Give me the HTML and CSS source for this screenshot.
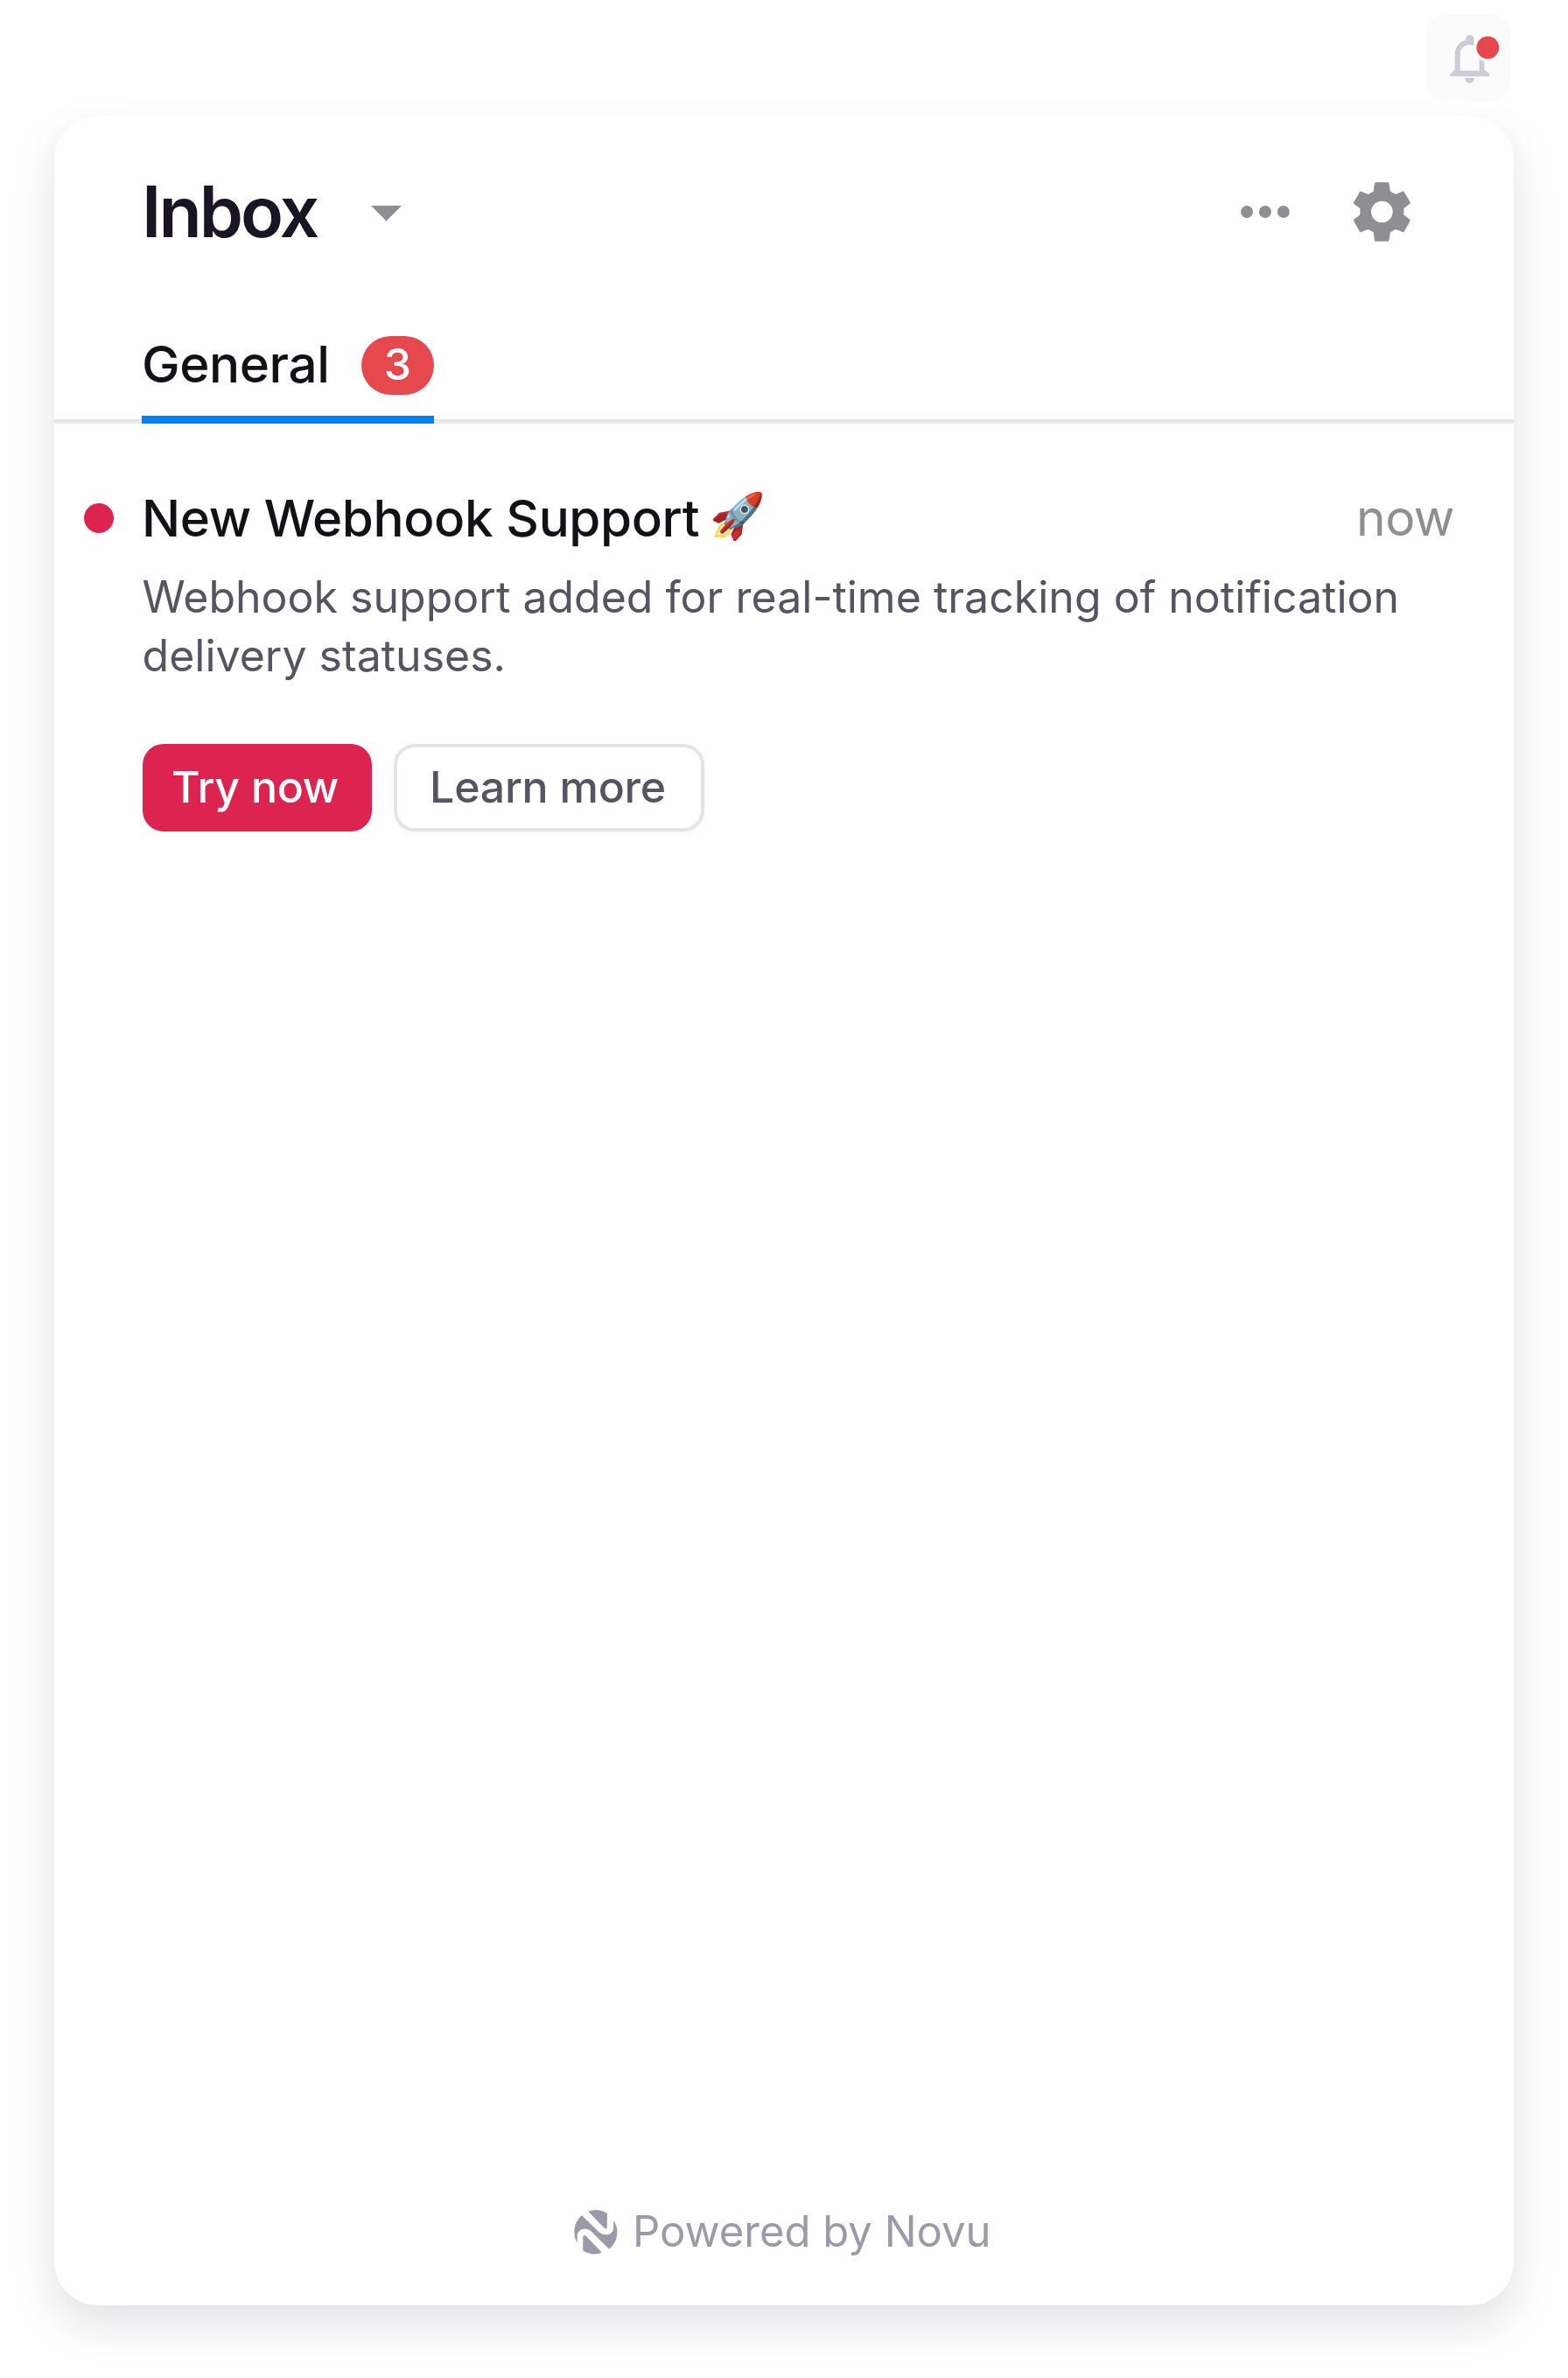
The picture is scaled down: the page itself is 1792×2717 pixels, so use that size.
FILE: index.html
```
<!DOCTYPE html>
<html lang="en">
<head>
<meta charset="utf-8">
<title>Inbox</title>
<link rel="stylesheet" href="styles.css">
</head>
<body>
<header class="topbar">
  <button class="bell" aria-label="Notifications">
    <svg viewBox="110 51 294 297" aria-hidden="true">
      <path class="bell-shape" fill-rule="evenodd" d="M248 137V132Q249 120 262 120Q275 120 277 132V137C299 143 312 163 312 186V239L328 252Q331 255 330 259Q329 262 325 262H200Q195 262 194 258Q194 255 197 252L211 239V188C211 162 225 143 248 137ZM229 242H295V188C295 166 281 154 262 154S229 166 229 188Z"/>
      <path class="bell-shape" d="M245 267H278Q276 285 262 285Q248 285 245 267Z"/>
      <path class="bell-gap" d="M277 120H324V205H294V156H277Z"/>
      <circle class="bell-gap" cx="324" cy="163" r="48"/>
      <circle class="bell-dot" cx="324" cy="163" r="38.5"/>
    </svg>
  </button>
</header>
<main class="card">
  <div class="card-head">
    <h1 class="title">Inbox</h1>
    <svg class="caret" viewBox="0 0 35 18" aria-hidden="true"><path d="M0 0H35L17.5 17.5Z"/></svg>
    <div class="actions">
      <svg class="dots" viewBox="0 0 56 14" aria-hidden="true"><circle cx="7" cy="7" r="7"/><circle cx="27.9" cy="7" r="7"/><circle cx="48.8" cy="7" r="7"/></svg>
      <svg class="gear" viewBox="498 84 200 204" aria-hidden="true"><path fill-rule="evenodd" d="M577 85H618Q622 85 622 88L627 116L645 126L669 116Q672 115 674 118L695 154Q696 157 693 159L673 174V196L693 212Q696 214 695 217L674 254Q672 257 669 255L645 246L627 256L622 284Q622 287 618 287H577Q574 287 573 284L569 256L551 246L527 255Q524 257 522 254L501 217Q500 214 502 212L523 196V174L502 159Q500 157 501 154L522 118Q524 115 527 116L551 126L569 116L573 88Q573 85 577 85ZM598 149A37 37 0 1 0 598 223A37 37 0 1 0 598 149Z"/></svg>
    </div>
  </div>
  <nav class="tabs">
    <a class="tab"><span class="tab-label">General</span><span class="badge">3</span></a>
  </nav>
  <article class="item">
    <div class="item-head">
      <span class="unread"></span>
      <h2 class="item-title">New Webhook Support</h2>
      <span class="emoji">🚀</span>
      <time class="time">now</time>
    </div>
    <p class="text">Webhook support added for real-time tracking of notification<br>delivery statuses.</p>
    <div class="buttons">
      <button class="btn primary">Try now</button>
      <button class="btn secondary">Learn more</button>
    </div>
  </article>
  <footer class="footer">
    <svg class="logo" viewBox="48 75 152 152" aria-hidden="true">
      <path d="M100 80A75.5 75.5 0 0 1 165 87V130Q165 145 154 136Z"/>
      <path d="M78 94L138 152C158 168 187 160 187 136V110A75.5 75.5 0 0 1 172 210L107 146C91 133 62 141 62 166V189A75.5 75.5 0 0 1 78 94Z"/>
      <path d="M82 215V170Q82 157 93 165L147 222A75.5 75.5 0 0 1 82 215Z"/>
    </svg>
    <span class="powered">Powered by Novu</span>
  </footer>
</main>
</body>
</html>
```
FILE: styles.css
```
* { box-sizing: border-box; }

body {
  margin: 0;
  min-height: 2717px;
  background: #fff;
  font-family: Inter, "Liberation Sans", sans-serif;
  color: #101215;
}

h1, h2, p { margin: 0; }

button {
  font: inherit;
  padding: 0;
  border: 0;
}

.topbar {
  display: flex;
  justify-content: flex-end;
  height: 133px;
  padding: 17px 65px 0 0;
}

.bell {
  width: 98px;
  height: 99px;
  border-radius: 22px;
  background: #fbfbfc;
}

.bell svg { display: block; width: 98px; height: 99px; }
.bell-shape { fill: #cacdd5; }
.bell-gap { fill: #fbfbfc; }
.bell-dot { fill: #e5484d; }

.card {
  display: flex;
  flex-direction: column;
  width: 1668px;
  height: 2501px;
  margin-left: 62px;
  border-radius: 50px;
  background: #fff;
  box-shadow: 0 21px 50px rgba(14, 27, 42, .13);
}

.card-head {
  display: flex;
  align-items: center;
  height: 217px;
  padding: 0 117px 0 100px;
}

.title {
  width: 262px;
  font-size: 80.5px;
  font-weight: 600;
  line-height: 97px;
  letter-spacing: -2.9px;
  color: #1a1523;
}

.caret { width: 35px; height: 18px; margin-top: 4px; fill: #8f8e94; }

.actions {
  display: flex;
  align-items: center;
  gap: 72px;
  margin-left: auto;
  fill: #8f8e94;
}

.dots { width: 56px; height: 14px; }
.gear { width: 66.7px; height: 68px; }

.tabs {
  height: 134px;
  padding-left: 100px;
  box-shadow: inset 0 -5px #e8e8e8;
}

.tab {
  display: flex;
  align-items: center;
  justify-content: space-between;
  width: 334px;
  height: 134px;
  box-shadow: inset 0 -9px #0081f1;
}

.tab-label {
  padding-bottom: 3px;
  font-size: 58.33px;
  font-weight: 500;
  letter-spacing: -.4px;
}

.badge {
  width: 83px;
  height: 67px;
  border-radius: 34px;
  background: #e5484d;
  color: #fff;
  font-size: 50px;
  font-weight: 500;
  line-height: 64px;
  text-align: center;
}

.item { padding: 73px 68px 0 100.5px; }

.item-head {
  display: flex;
  align-items: center;
  height: 70px;
}

.unread {
  width: 34px;
  height: 34px;
  margin: 0 32px 0 -66.5px;
  border-radius: 50%;
  background: #dd2450;
}

.item-title {
  font-size: 58.33px;
  font-weight: 500;
  line-height: 70px;
  letter-spacing: -.38px;
}

.emoji {
  margin-left: 12px;
  padding-bottom: 7px;
  font-size: 51px;
  line-height: 70px;
}

.time {
  margin-left: auto;
  font-size: 57px;
  line-height: 70px;
  letter-spacing: -.5px;
  color: #8f8f8f;
}

.text {
  margin-top: 22px;
  font-size: 50px;
  line-height: 66.67px;
  letter-spacing: .01px;
  color: #535661;
  white-space: nowrap;
}

.buttons {
  display: flex;
  gap: 25px;
  margin-top: 68px;
}

.btn {
  height: 100px;
  border-radius: 24px;
  font-size: 50px;
  font-weight: 500;
  line-height: 98px;
  letter-spacing: -.25px;
}

.primary {
  width: 262px;
  padding: 0 4px 2px 0;
  background: #dd2450;
  color: #fff;
}

.secondary {
  width: 355px;
  padding: 0 2px 2px 0;
  border: 4px solid #e1e4e8;
  background: #fff;
  box-shadow: 0 4px 8px rgba(14, 18, 27, .03);
  color: #535661;
  line-height: 90px;
}

.footer {
  display: flex;
  align-items: center;
  justify-content: center;
  gap: 17px;
  height: 60px;
  margin: auto 0 54px;
  padding-right: 4px;
  color: #9a9ba8;
}

.logo { width: 50.5px; height: 50.5px; margin-top: 1px; fill: #9a9ba8; }
.powered { font-size: 49px; line-height: 60px; }
```
